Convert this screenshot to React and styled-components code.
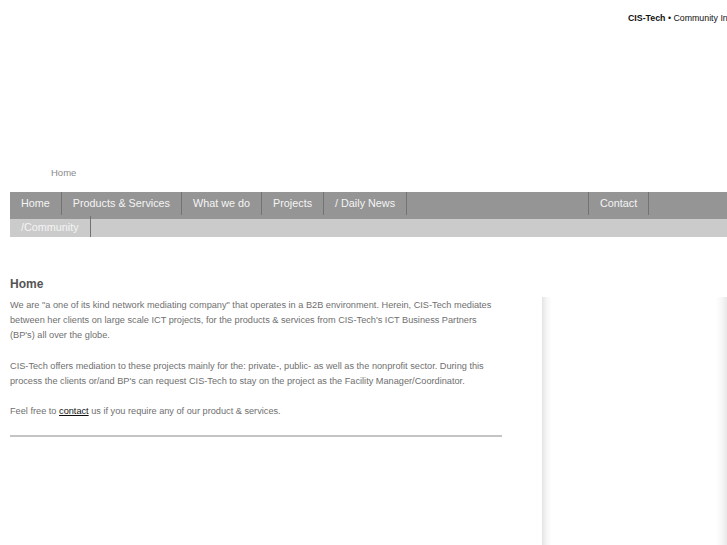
import React from 'react';
import styled, { createGlobalStyle } from 'styled-components';

const GlobalStyle = createGlobalStyle`
  html, body {
    margin: 0;
    padding: 0;
    background: #fff;
    overflow: hidden;
  }
  body {
    font-family: 'Liberation Sans', Arial, sans-serif;
  }
`;

const Page = styled.div`
  width: 980px;
  padding: 0 10px;
  height: 545px;
`;

const Header = styled.header`
  height: 160px;
  padding: 13px 0 0 618px;
  box-sizing: border-box;
  font-size: 8.8px;
  color: #111;
  white-space: nowrap;

  strong {
    font-weight: bold;
  }
`;

const Crumbs = styled.div`
  padding-left: 41px;
  height: 32px;
  font-size: 9.5px;
  color: #8a8a8a;
  line-height: 26px;
`;

const Nav = styled.nav`
  display: flex;
  flex-direction: column;
`;

const NavRow = styled.ul`
  display: flex;
  margin: 0;
  padding: 0;
  list-style: none;
  height: ${(p) => p.$height}px;
  background: ${(p) => p.$bg};
`;

const NavItem = styled.li`
  padding: ${(p) => (p.$sub ? '3px 11px 0' : '0 11px')};
  margin: ${(p) => (p.$sub ? '-3px 0 0' : '0 0 4px')};
  font-size: 10.8px;
  color: #f4f4f4;
  line-height: ${(p) => (p.$sub ? 17 : 22)}px;
  border-right: 1px solid #737373;
  white-space: nowrap;
`;

const Spacer = styled.li`
  flex: 0 0 ${(p) => p.$w}px;
  border-right: 1px solid #737373;
  margin: 0 0 4px;
`;

const Main = styled.div`
  display: flex;
  gap: 40px;
  margin-top: 40px;
  align-items: flex-start;
`;

const Content = styled.section`
  width: 492px;
`;

const Title = styled.h1`
  margin: 0 0 6px;
  font-size: 12px;
  font-weight: bold;
  color: #555;
  line-height: 15px;
`;

const Para = styled.p`
  margin: 0 0 15.2px;
  font-size: 9.2px;
  line-height: 15.2px;
  color: #6f6f6f;

  a {
    color: #111;
    text-decoration: underline;
  }
`;

const Rule = styled.hr`
  margin: 4px 0 0;
  border: 0;
  border-top: 2px solid #c4c4c4;
`;

const Side = styled.aside`
  margin-top: 20px;
  width: 186px;
  height: 260px;
  background: linear-gradient(
    to right,
    #e4e4e4 0,
    #f7f7f7 5px,
    #fff 10px,
    #fff calc(100% - 12px),
    #f6f6f6 calc(100% - 6px),
    #e6e6e6 100%
  );
`;

export default function App() {
  return (
    <>
      <GlobalStyle />
      <Page>
        <Header>
          <strong>CIS-Tech</strong> • Community Interaction Solutions &amp; Technology
        </Header>
        <Crumbs>Home</Crumbs>
        <Nav>
          <NavRow $height={27} $bg="#959595">
            <NavItem>Home</NavItem>
            <NavItem>Products &amp; Services</NavItem>
            <NavItem>What we do</NavItem>
            <NavItem>Projects</NavItem>
            <NavItem>/ Daily News</NavItem>
            <Spacer $w={181} />
            <NavItem>Contact</NavItem>
          </NavRow>
          <NavRow $height={18} $bg="#cbcbcb">
            <NavItem $sub>/Community</NavItem>
          </NavRow>
        </Nav>
        <Main>
          <Content>
            <Title>Home</Title>
            <Para>
              We are "a one of its kind network mediating company" that operates in a B2B
              environment. Herein, CIS-Tech mediates between her clients on large scale ICT
              projects, for the products &amp; services from CIS-Tech's ICT Business Partners
              (BP's) all over the globe.
            </Para>
            <Para>
              CIS-Tech offers mediation to these projects mainly for the: private-, public- as
              well as the nonprofit sector. During this process the clients or/and BP's can
              request CIS-Tech to stay on the project as the Facility Manager/Coordinator.
            </Para>
            <Para>
              Feel free to <a href="#contact">contact</a> us if you require any of our product
              &amp; services.
            </Para>
            <Rule />
          </Content>
          <Side />
        </Main>
      </Page>
    </>
  );
}
